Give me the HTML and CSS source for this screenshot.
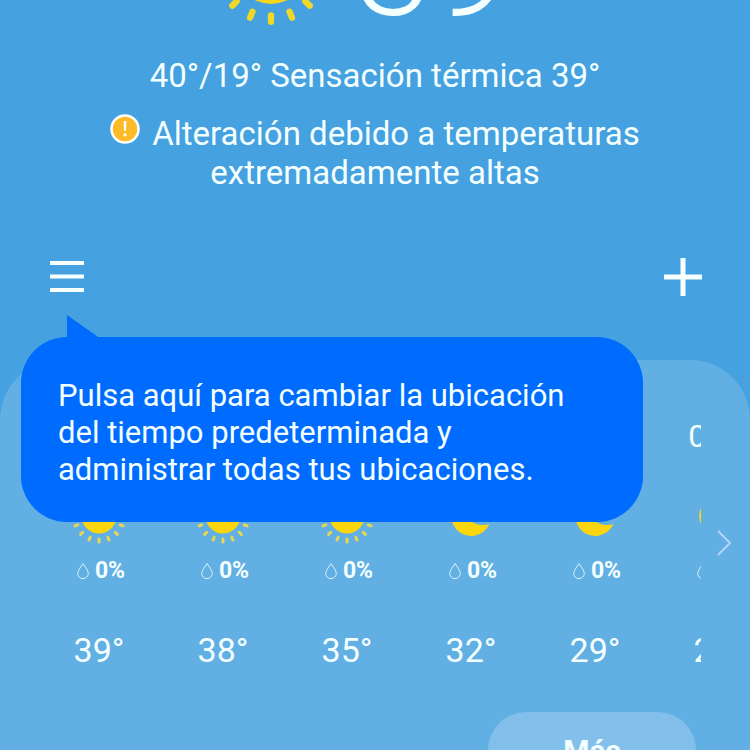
FILE: index.html
```html
<!DOCTYPE html>
<html lang="es">
<head>
    <meta charset="UTF-8">
    <meta name="viewport" content="width=device-width, initial-scale=1.0">
    <title>El tiempo</title>
    <link rel="stylesheet" href="styles.css">
</head>
<body>

    <!-- shared icons -->
    <svg class="sprite" aria-hidden="true">
        <symbol id="sun" viewBox="0 0 56 56">
            <circle cx="28" cy="28" r="17.500" stroke="none"/>
            <g stroke-width="3" stroke-linecap="round">
                <path id="ray" d="M28 51v3"/>
                <use href="#ray" transform="rotate(22.500 28 28)"/>
                <use href="#ray" transform="rotate(45 28 28)"/>
                <use href="#ray" transform="rotate(67.500 28 28)"/>
                <use href="#ray" transform="rotate(90 28 28)"/>
                <use href="#ray" transform="rotate(112.500 28 28)"/>
                <use href="#ray" transform="rotate(135 28 28)"/>
                <use href="#ray" transform="rotate(157.500 28 28)"/>
                <use href="#ray" transform="rotate(180 28 28)"/>
                <use href="#ray" transform="rotate(202.500 28 28)"/>
                <use href="#ray" transform="rotate(225 28 28)"/>
                <use href="#ray" transform="rotate(247.500 28 28)"/>
                <use href="#ray" transform="rotate(270 28 28)"/>
                <use href="#ray" transform="rotate(292.500 28 28)"/>
                <use href="#ray" transform="rotate(315 28 28)"/>
                <use href="#ray" transform="rotate(337.500 28 28)"/>
            </g>
        </symbol>
        <symbol id="moon" viewBox="0 0 56 56">
            <path d="M21.700 9A20 20 0 1 0 46.500 36A20 20 0 0 1 21.700 9Z" stroke="none"/>
        </symbol>
        <symbol id="drop" viewBox="0 0 14 18">
            <path d="M7 1.500C5 5 1.700 8.200 1.700 11.300a5.300 5.300 0 0 0 10.600 0C12.300 8.200 9 5 7 1.500Z"/>
        </symbol>
    </svg>

    <main class="weather">
        <div class="current">
            <svg class="current-icon" aria-hidden="true"><use href="#sun"/></svg>
            <span class="current-temp">39</span>
        </div>
        <p class="feels">40°/19° Sensación térmica 39°</p>
        <p class="alert">
            <svg class="alert-icon" viewBox="0 0 30 30" aria-hidden="true">
                <circle cx="15" cy="15" r="13.500" fill="#fdbb27" stroke="#fff" stroke-width="2.500"/>
                <path d="M13.600 7h2.800l-.5 10h-1.800z" fill="#fff"/>
                <circle cx="15" cy="20.800" r="1.600" fill="#fff"/>
            </svg>Alteración debido a temperaturas<br>extremadamente altas
        </p>

        <nav class="toolbar">
            <button class="tool" aria-label="Menú">
                <svg width="34" height="38" viewBox="0 0 34 38"><path d="M0 5h34M0 18.500h34M0 32h34" stroke-width="4"/></svg>
            </button>
            <button class="tool" aria-label="Añadir ubicación">
                <svg width="38" height="38" viewBox="0 0 38 38"><path d="M0 19h38M19 0v38" stroke-width="5"/></svg>
            </button>
            <div class="tip" role="status">
                Pulsa aquí para cambiar la ubicación<br>del tiempo predeterminada y<br>administrar todas tus ubicaciones.
            </div>
        </nav>

        <section class="panel">
            <div class="forecast">
                <ul class="hours">
                    <li class="hour">
                        <span class="time"></span>
                        <svg class="sky"><use href="#sun"/></svg>
                        <span class="rain"><svg class="drop"><use href="#drop"/></svg>0%</span>
                        <span class="temp">39°</span>
                    </li>
                    <li class="hour">
                        <span class="time"></span>
                        <svg class="sky"><use href="#sun"/></svg>
                        <span class="rain"><svg class="drop"><use href="#drop"/></svg>0%</span>
                        <span class="temp">38°</span>
                    </li>
                    <li class="hour">
                        <span class="time"></span>
                        <svg class="sky"><use href="#sun"/></svg>
                        <span class="rain"><svg class="drop"><use href="#drop"/></svg>0%</span>
                        <span class="temp">35°</span>
                    </li>
                    <li class="hour">
                        <span class="time"></span>
                        <svg class="sky"><use href="#moon"/></svg>
                        <span class="rain"><svg class="drop"><use href="#drop"/></svg>0%</span>
                        <span class="temp">32°</span>
                    </li>
                    <li class="hour">
                        <span class="time"></span>
                        <svg class="sky"><use href="#moon"/></svg>
                        <span class="rain"><svg class="drop"><use href="#drop"/></svg>0%</span>
                        <span class="temp">29°</span>
                    </li>
                    <li class="hour">
                        <span class="time">0:00</span>
                        <svg class="sky"><use href="#moon"/></svg>
                        <span class="rain"><svg class="drop"><use href="#drop"/></svg>0%</span>
                        <span class="temp">27°</span>
                    </li>
                </ul>
                <button class="next" aria-label="Siguiente">
                    <svg width="16" height="28" viewBox="0 0 16 28"><path d="M2 2l12 12L2 26"/></svg>
                </button>
            </div>
            <div class="actions">
                <button class="more">Más</button>
            </div>
        </section>
    </main>

</body>
</html>
```
FILE: styles.css
```css
* {
    box-sizing: border-box;
}
body {
    margin: 0;
    background-color: #45a1df;
    font-family: Roboto, sans-serif;
    color: #f4ffff;
}
p, ul {
    margin: 0;
    padding: 0;
}
button {
    border: none;
    background: none;
    padding: 0;
    font-family: inherit;
    color: inherit;
    cursor: pointer;
}
svg {
    display: block;
}
.sprite {
    position: absolute;
    width: 0;
    height: 0;
}
.weather {
    display: flex;
    flex-direction: column;
    height: 100vh;
    overflow: hidden;
}

/* current conditions */
.current {
    display: flex;
    justify-content: center;
    align-items: flex-end;
    gap: 24px;
    height: 26px;
    padding-right: 28px;
    flex-shrink: 0;
    overflow: hidden;
}
.current-icon {
    width: 118px;
    height: 118px;
    flex-shrink: 0;
    fill: #f8d51c;
    stroke: #f0d828;
}
.current-temp {
    font-size: 140px;
    line-height: 118px;
    font-weight: 300;
}
.feels {
    margin-top: 30px;
    font-size: 33px;
    line-height: 40px;
    text-align: center;
}
.alert {
    margin-top: 18px;
    font-size: 33px;
    line-height: 39px;
    text-align: center;
}
.alert-icon {
    display: inline-block;
    width: 30px;
    height: 30px;
    margin-right: 12px;
    vertical-align: top;
}

/* toolbar with its tip */
.toolbar {
    position: relative;
    display: flex;
    justify-content: space-between;
    align-items: center;
    margin-top: 66px;
    padding: 0 48px 0 50px;
}
.tool svg {
    stroke: #f8ffff;
}
.tip {
    position: absolute;
    top: 79px;
    left: 21px;
    right: 107px;
    z-index: 1;
    padding: 40px 37px 34px;
    border-radius: 46px;
    background-color: #006cff;
    font-size: 31px;
    line-height: 37px;
}
.tip::before {
    content: "";
    position: absolute;
    top: -22px;
    left: 46px;
    width: 34px;
    height: 24px;
    background-color: #006cff;
    clip-path: polygon(0 0, 100% 100%, 0 100%);
}

/* hourly forecast */
.panel {
    margin-top: 64px;
    padding-top: 56px;
    flex: 1;
    border-radius: 60px 60px 0 0;
    background-color: #61afe3;
}
.forecast {
    display: flex;
    align-items: center;
    padding: 0 18px 0 37px;
}
.hours {
    display: flex;
    flex: 1;
    overflow: hidden;
    list-style: none;
}
.hour {
    display: flex;
    flex-direction: column;
    align-items: center;
    flex: 0 0 124px;
}
.time {
    height: 40px;
    font-size: 32px;
    line-height: 40px;
}
.sky {
    width: 56px;
    height: 56px;
    margin-top: 32px;
    fill: #fbd60c;
    stroke: #e8d750;
}
.rain {
    display: flex;
    align-items: center;
    gap: 5px;
    margin-top: 12px;
    padding-left: 3px;
    font-size: 23px;
    line-height: 30px;
    font-weight: 700;
}
.drop {
    width: 14px;
    height: 18px;
    fill: none;
    stroke: #d8f3fb;
}
.temp {
    margin-top: 44px;
    font-size: 34px;
    line-height: 40px;
}
.next {
    padding-left: 15px;
}
.next svg {
    fill: none;
    stroke: #b4d6f6;
    stroke-width: 2;
}
.actions {
    display: flex;
    justify-content: flex-end;
    margin-top: 42px;
    padding-right: 54px;
}
.more {
    width: 208px;
    height: 76px;
    border-radius: 38px;
    background-color: #82bfea;
    font-size: 30px;
    font-weight: 700;
}
```
